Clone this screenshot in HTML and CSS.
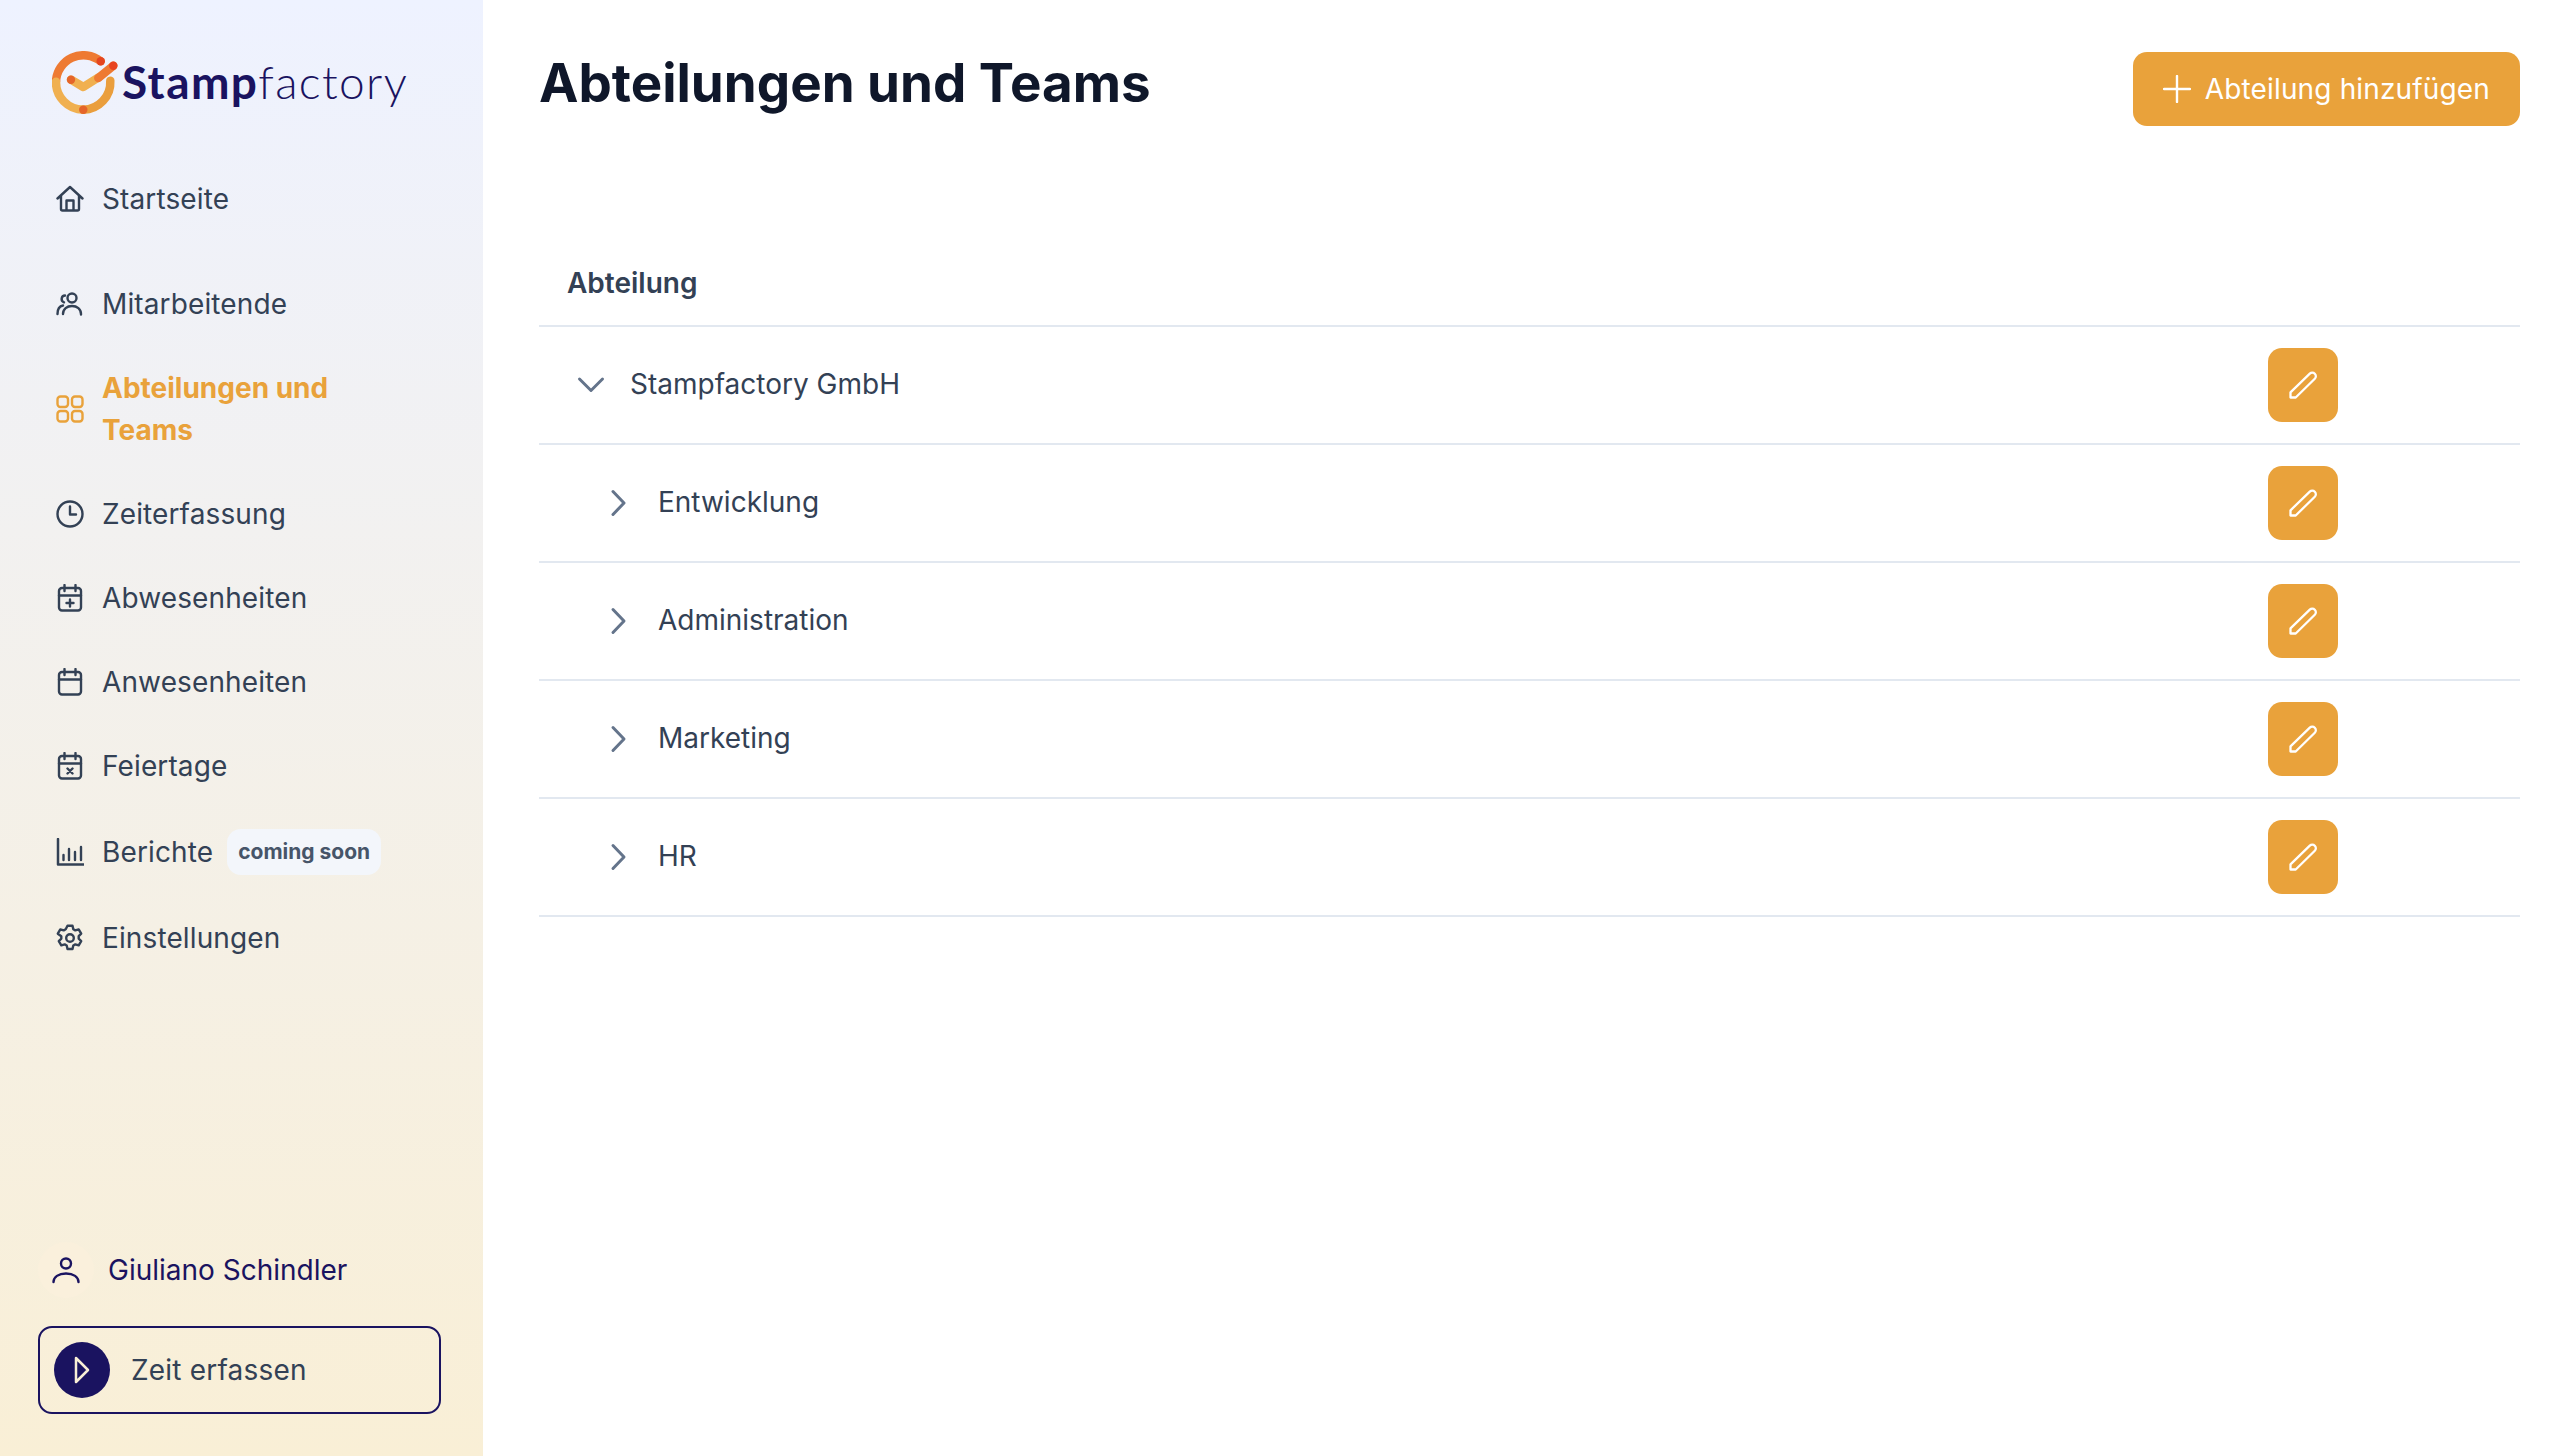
FILE: index.html
```html
<!DOCTYPE html>
<html lang="de">
<head>
<meta charset="UTF-8" />
<meta name="viewport" content="width=device-width, initial-scale=1" />
<title>Abteilungen und Teams</title>
<link rel="stylesheet" href="styles.css">
</head>

<body>
<svg class="sprites" width="0" height="0" aria-hidden="true">
  <symbol id="i-pencil" viewBox="0 0 28 28"><path d="M1.500 26.500v-5.200L20.800 2.600a3.600 3.600 0 0 1 5 .1 3.500 3.500 0 0 1 0 5L6.700 26.500z"/></symbol>
  <symbol id="i-right" viewBox="0 0 28 28"><path d="M8 2.500 19 14 8 25.500"/></symbol>
  <symbol id="i-down" viewBox="0 0 28 28"><path d="M2.500 8 14 19.500 25.500 8"/></symbol>
</svg>

<div class="app">

<aside class="sidebar">
  <div class="logo">
    <svg class="logo-mark" width="70" height="66" viewBox="0 0 70 66" fill="none" stroke-linecap="round" stroke-width="8.500">
      <path d="M48.700 10.300A27.500 27.500 0 0 0 4 30.700" stroke="#ee7a33"/>
      <path d="M4 30.700A27.500 27.500 0 0 0 31.300 58.700" stroke="#f0b050"/>
      <path d="M31.300 58.700A27.500 27.500 0 0 0 58.300 29.700" stroke="#ea9e3d"/>
      <path d="M19 28.700 31.300 36 46.300 26.500" stroke="#f0b050" stroke-linejoin="round"/>
      <path d="M46.300 27 61.300 14.700" stroke="#ee7a33"/>
      <circle cx="48.700" cy="10.300" r="4.200" fill="#e54520"/>
      <circle cx="61.300" cy="14.700" r="4.200" fill="#e8421f"/>
      <circle cx="19" cy="28.700" r="4.200" fill="#e5652a"/>
      <circle cx="31.300" cy="58.700" r="4.200" fill="#e5652a"/>
    </svg>
    <span class="logo-text"><b>Stamp</b>factory</span>
  </div>

  <nav class="nav">
    <a class="nav-item nav-first">
      <svg class="icon" viewBox="0 0 28 28"><path d="M1.500 13.500 14 2l12.500 11.500M5 10.500V24a1.500 1.500 0 0 0 1.500 1.500h15A1.500 1.500 0 0 0 23 24V10.500M10.500 25.500V15.500h7v10"/></svg>
      Startseite
    </a>
    <a class="nav-item">
      <svg class="icon" viewBox="0 0 28 28"><circle cx="16" cy="8" r="4.500"/><path d="M7 24c0-5 4-8 9-8s9 3 9 8v.5M9 5.500a3.500 3.500 0 0 0-1 6.800M7 15.500c-3.500.5-5.500 3.500-5.500 8.500"/></svg>
      Mitarbeitende
    </a>
    <a class="nav-item is-active">
      <svg class="icon" viewBox="0 0 28 28"><rect x="1.500" y="1.500" width="10.500" height="10.500" rx="3"/><rect x="16" y="1.500" width="10.500" height="10.500" rx="3"/><rect x="1.500" y="16" width="10.500" height="10.500" rx="3"/><rect x="16" y="16" width="10.500" height="10.500" rx="3"/></svg>
      <span>Abteilungen und Teams</span>
    </a>
    <a class="nav-item">
      <svg class="icon" viewBox="0 0 28 28"><circle cx="14" cy="14" r="12.500"/><path d="M14 6.500V14.500H20"/></svg>
      Zeiterfassung
    </a>
    <a class="nav-item">
      <svg class="icon" viewBox="0 0 28 28"><rect x="3" y="4" width="22" height="22.500" rx="3"/><path d="M8.500 1v6M19.500 1v6M3 11.500h22M14 15.500v7M10.500 19h7"/></svg>
      Abwesenheiten
    </a>
    <a class="nav-item">
      <svg class="icon" viewBox="0 0 28 28"><rect x="3" y="4" width="22" height="22.500" rx="3"/><path d="M8.500 1v6M19.500 1v6M3 11.500h22"/></svg>
      Anwesenheiten
    </a>
    <a class="nav-item">
      <svg class="icon" viewBox="0 0 28 28"><rect x="3" y="4" width="22" height="22.500" rx="3"/><path d="M8.500 1v6M19.500 1v6M3 11.500h22M11.500 16.500l5 5M16.500 16.500l-5 5"/></svg>
      Feiertage
    </a>
    <a class="nav-item">
      <svg class="icon" viewBox="0 0 28 28"><path d="M2 1v25.500h26" stroke-width="2.500"/><path d="M7.500 17v5M13 11v11M19 14v8M25 9v13"/></svg>
      Berichte
      <span class="badge">coming soon</span>
    </a>
    <a class="nav-item">
      <svg class="icon" viewBox="0 0 28 28"><circle cx="14" cy="14" r="3.800"/><path d="M11.500 1.800h5l.8 3.500 2 1.100 3.400-1 2.500 4.300-2.500 2.500v2.400l2.500 2.500-2.500 4.300-3.400-1-2 1.100-.8 3.500h-5l-.8-3.500-2-1.100-3.400 1-2.500-4.300 2.500-2.500v-2.400L1.800 9.700l2.500-4.300 3.400 1 2-1.100z"/></svg>
      Einstellungen
    </a>
  </nav>

  <div class="sidebar-bottom">
    <div class="user">
      <span class="avatar">
        <svg class="icon" viewBox="0 0 28 28"><circle cx="14" cy="7.500" r="5"/><path d="M1.500 26c0-5 5-8.500 12.500-8.500s12.500 3.500 12.500 8.500"/></svg>
      </span>
      Giuliano Schindler
    </div>
    <button class="track-btn">
      <span class="track-circle">
        <svg width="16" height="28" viewBox="0 0 16 28" fill="none"><path d="M2 2 14 14 2 26z"/></svg>
      </span>
      Zeit erfassen
    </button>
  </div>
</aside>

<main class="main">
  <div class="main-head">
    <h1>Abteilungen und Teams</h1>
    <button class="add-btn">
      <svg width="28" height="28" viewBox="0 0 28 28"><path d="M14 1v26M1 14h26"/></svg>
      Abteilung hinzufügen
    </button>
  </div>

  <div class="tree">
    <div class="tree-head">Abteilung</div>

    <div class="tree-row">
      <div class="tree-name">
        <svg class="chevron"><use href="#i-down"/></svg>
        Stampfactory GmbH
      </div>
      <button class="edit-btn"><svg><use href="#i-pencil"/></svg></button>
    </div>
    <div class="tree-row child">
      <div class="tree-name">
        <svg class="chevron"><use href="#i-right"/></svg>
        Entwicklung
      </div>
      <button class="edit-btn"><svg><use href="#i-pencil"/></svg></button>
    </div>
    <div class="tree-row child">
      <div class="tree-name">
        <svg class="chevron"><use href="#i-right"/></svg>
        Administration
      </div>
      <button class="edit-btn"><svg><use href="#i-pencil"/></svg></button>
    </div>
    <div class="tree-row child">
      <div class="tree-name">
        <svg class="chevron"><use href="#i-right"/></svg>
        Marketing
      </div>
      <button class="edit-btn"><svg><use href="#i-pencil"/></svg></button>
    </div>
    <div class="tree-row child">
      <div class="tree-name">
        <svg class="chevron"><use href="#i-right"/></svg>
        HR
      </div>
      <button class="edit-btn"><svg><use href="#i-pencil"/></svg></button>
    </div>
  </div>
</main>

</div>
</body>
</html>
```

FILE: styles.css
```css
* {
  box-sizing: border-box;
}

body {
  margin: 0;
  font-family: Inter, "Liberation Sans", sans-serif;
  font-size: 28px;
  line-height: 42px;
  color: #334155;
  background-color: white;
}

button {
  font: inherit;
  border: none;
  cursor: pointer;
}

.sprites {
  display: block;
  height: 0;
}

.app {
  display: flex;
  height: 100vh;
}

/* Sidebar */
.sidebar {
  width: 483px;
  flex-shrink: 0;
  display: flex;
  flex-direction: column;
  padding: 52px 42px 42px 0;
  background: linear-gradient(180deg, #eef2ff 0%, #f9efd6 100%);
}

.logo {
  display: flex;
  align-items: center;
  height: 63px;
  margin-bottom: 42px;
  padding-left: 52px;
}

.logo-mark {
  flex-shrink: 0;
}

.logo-text {
  padding-bottom: 3px;
  font-family: Lato, sans-serif;
  font-size: 46px;
  line-height: 60px;
  font-weight: 300;
  letter-spacing: 1.400px;
  color: #1a1360;
}

.logo-text b {
  font-weight: 700;
}

.nav {
  display: flex;
  flex-direction: column;
}

.nav-item {
  display: flex;
  align-items: center;
  gap: 18px;
  padding: 21px 0 21px 56px;
  letter-spacing: 0.12px;
}

.nav-first {
  margin-bottom: 21px;
}

.icon {
  width: 28px;
  height: 28px;
  flex-shrink: 0;
  fill: none;
  stroke: currentColor;
  stroke-width: 2.400;
  stroke-linecap: round;
  stroke-linejoin: round;
}

.is-active {
  color: #e9a23b;
  font-weight: 700;
  letter-spacing: 0;
}

.is-active span {
  max-width: 270px;
}

.badge {
  height: 46px;
  padding: 0 11px;
  margin-left: -4px;
  border-radius: 14px;
  background-color: #f3f6fb;
  color: #475569;
  font-size: 21px;
  line-height: 46px;
  font-weight: 700;
  letter-spacing: 0;
}

.sidebar-bottom {
  margin-top: auto;
  padding-left: 38px;
}

.user {
  display: flex;
  align-items: center;
  gap: 14px;
  margin-bottom: 28px;
  color: #1a1360;
}

.avatar {
  display: flex;
  align-items: center;
  justify-content: center;
  width: 56px;
  height: 56px;
  border-radius: 50%;
  background-color: #faf0dc;
}

.track-btn {
  display: flex;
  align-items: center;
  gap: 21px;
  width: 403px;
  height: 88px;
  padding: 0 14px;
  border: 2px solid #1a1360;
  border-radius: 14px;
  background-color: transparent;
  color: #334155;
  text-align: left;
  letter-spacing: 0.2px;
}

.track-circle {
  display: flex;
  align-items: center;
  justify-content: center;
  width: 56px;
  height: 56px;
  border-radius: 50%;
  background-color: #1a1360;
}

.track-circle path {
  stroke: #f9efd6;
  stroke-width: 2.500;
  stroke-linejoin: round;
}

/* Main */
.main {
  flex: 1;
  padding: 52px 46px 0 56px;
}

.main-head {
  display: flex;
  justify-content: space-between;
  align-items: flex-start;
  margin-bottom: 114px;
}

h1 {
  margin: 0;
  font-size: 52.900px;
  line-height: 63px;
  font-weight: 700;
  color: #0f172a;
}

.add-btn {
  display: flex;
  align-items: center;
  gap: 14px;
  height: 74px;
  padding: 0 30px;
  border-radius: 14px;
  background-color: #e9a23b;
  color: white;
  letter-spacing: 0.15px;
}

.add-btn path {
  stroke: white;
  stroke-width: 2.400;
  stroke-linecap: round;
}

.tree-head {
  height: 87px;
  padding: 22px 28px 0;
  border-bottom: 2px solid #e2e8f0;
  font-weight: 600;
}

.tree-row {
  display: flex;
  justify-content: space-between;
  align-items: center;
  height: 118px;
  padding: 0 182px 0 38px;
  border-bottom: 2px solid #e2e8f0;
}

.tree-row.child {
  padding-left: 66px;
}

.tree-name {
  display: flex;
  align-items: center;
  gap: 25px;
  padding-bottom: 2px;
}

.chevron {
  width: 28px;
  height: 28px;
  margin-top: 2px;
  fill: none;
  stroke: #64748b;
  stroke-width: 3;
  stroke-linecap: round;
  stroke-linejoin: round;
}

.edit-btn {
  display: flex;
  align-items: center;
  justify-content: center;
  width: 70px;
  height: 74px;
  padding: 0;
  border-radius: 14px;
  background-color: #e9a23b;
}

.edit-btn svg {
  width: 28px;
  height: 28px;
  fill: none;
  stroke: white;
  stroke-width: 2.300;
  stroke-linejoin: round;
}
```
